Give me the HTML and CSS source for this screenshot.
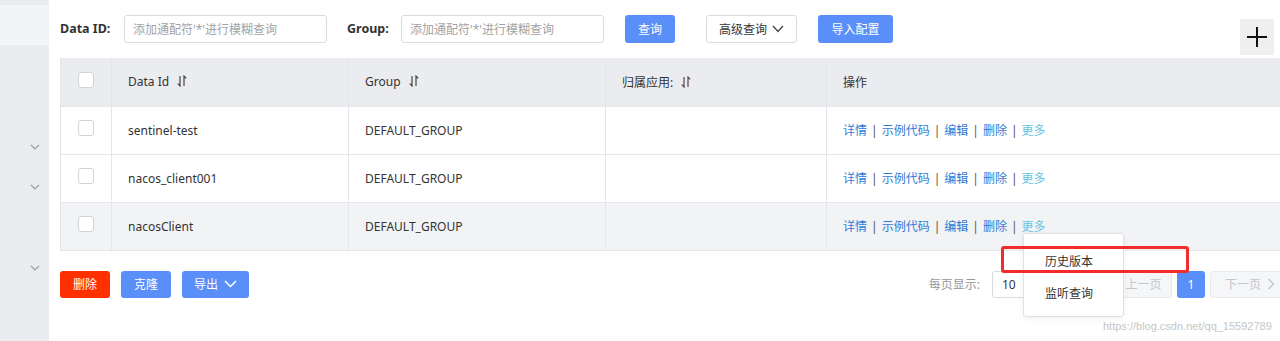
FILE: index.html
```html
<!DOCTYPE html>
<html lang="zh-CN">
<head>
    <meta charset="UTF-8" />
    <meta name="viewport" content="width=device-width, initial-scale=1.0"/>
    <title>配置列表</title>
    <link rel="stylesheet" href="styles.css">
</head>
<body>
<div class="layout">
    <aside class="sidebar">
        <div class="side-active"></div>
        <div class="side-arrow arrow-1"><svg width="10" height="6" viewBox="0 0 10 6"><polyline points="1,1 5,5 9,1" fill="none" stroke="#9a9ea6" stroke-width="1.2"/></svg></div>
        <div class="side-arrow arrow-2"><svg width="10" height="6" viewBox="0 0 10 6"><polyline points="1,1 5,5 9,1" fill="none" stroke="#9a9ea6" stroke-width="1.2"/></svg></div>
        <div class="side-arrow arrow-3"><svg width="10" height="6" viewBox="0 0 10 6"><polyline points="1,1 5,5 9,1" fill="none" stroke="#9a9ea6" stroke-width="1.2"/></svg></div>
    </aside>

    <main class="content">
        <div class="toolbar">
            <label class="field-label label-id">Data ID:</label>
            <input class="search-input" type="text" placeholder="添加通配符'*'进行模糊查询" />
            <label class="field-label label-group">Group:</label>
            <input class="search-input" type="text" placeholder="添加通配符'*'进行模糊查询" />
            <button class="btn btn-primary btn-query">查询</button>
            <button class="btn btn-normal btn-advanced">高级查询
                <svg width="12" height="8" viewBox="0 0 12 8"><polyline points="1,1 6,6.5 11,1" fill="none" stroke="#444" stroke-width="1.3"/></svg>
            </button>
            <button class="btn btn-primary btn-import">导入配置</button>
            <button class="btn-add">
                <svg width="22" height="22" viewBox="0 0 22 22"><path d="M11 1 V21 M1 11 H21" stroke="#111" stroke-width="2"/></svg>
            </button>
        </div>

        <table class="config-table">
            <colgroup>
                <col class="col-check">
                <col class="col-id">
                <col class="col-group">
                <col class="col-app">
                <col class="col-ops">
            </colgroup>
            <thead>
            <tr>
                <th class="cell-check"><span class="checkbox"></span></th>
                <th>Data Id <span class="sort"><svg width="10" height="12" viewBox="0 0 10 12"><path d="M3 1 V11 L0.8 8.6 M7 11 V1 L9.2 3.4" fill="none" stroke="#444" stroke-width="1.2"/></svg></span></th>
                <th>Group <span class="sort"><svg width="10" height="12" viewBox="0 0 10 12"><path d="M3 1 V11 L0.8 8.6 M7 11 V1 L9.2 3.4" fill="none" stroke="#444" stroke-width="1.2"/></svg></span></th>
                <th>归属应用: <span class="sort"><svg width="10" height="12" viewBox="0 0 10 12"><path d="M3 1 V11 L0.8 8.6 M7 11 V1 L9.2 3.4" fill="none" stroke="#5a4646" stroke-width="1.2"/></svg></span></th>
                <th>操作</th>
            </tr>
            </thead>
            <tbody>
            <tr>
                <td class="cell-check"><span class="checkbox"></span></td>
                <td>sentinel-test</td>
                <td>DEFAULT_GROUP</td>
                <td></td>
                <td class="actions"><a>详情</a><span class="sep">|</span><a>示例代码</a><span class="sep">|</span><a>编辑</a><span class="sep">|</span><a>删除</a><span class="sep">|</span><a class="more">更多</a></td>
            </tr>
            <tr>
                <td class="cell-check"><span class="checkbox"></span></td>
                <td>nacos_client001</td>
                <td>DEFAULT_GROUP</td>
                <td></td>
                <td class="actions"><a>详情</a><span class="sep">|</span><a>示例代码</a><span class="sep">|</span><a>编辑</a><span class="sep">|</span><a>删除</a><span class="sep">|</span><a class="more">更多</a></td>
            </tr>
            <tr class="row-hover">
                <td class="cell-check"><span class="checkbox"></span></td>
                <td>nacosClient</td>
                <td>DEFAULT_GROUP</td>
                <td></td>
                <td class="actions"><a>详情</a><span class="sep">|</span><a>示例代码</a><span class="sep">|</span><a>编辑</a><span class="sep">|</span><a>删除</a><span class="sep">|</span><a class="more">更多</a></td>
            </tr>
            </tbody>
        </table>

        <div class="footer-bar">
            <div class="batch">
                <button class="btn btn-danger btn-small">删除</button>
                <button class="btn btn-primary btn-small">克隆</button>
                <button class="btn btn-primary btn-export">导出
                    <svg width="13" height="8" viewBox="0 0 13 8"><polyline points="1,1 6.5,6.5 12,1" fill="none" stroke="#fff" stroke-width="1.5"/></svg>
                </button>
            </div>
            <div class="pager">
                <span class="page-label">每页显示:</span>
                <div class="page-size">10</div>
                <button class="page-btn page-prev">上一页</button>
                <button class="page-btn page-current">1</button>
                <button class="page-btn page-next">下一页
                    <svg width="8" height="12" viewBox="0 0 8 12"><polyline points="1.5,1 6.5,6 1.5,11" fill="none" stroke="#c4c6cb" stroke-width="1.4"/></svg>
                </button>
            </div>
        </div>
    </main>
</div>

<div class="menu">
    <div class="menu-item">历史版本</div>
    <div class="menu-item">监听查询</div>
</div>
<div class="highlight"></div>
<div class="watermark">https://blog.csdn.net/qq_15592789</div>
</body>
</html>
```

FILE: styles.css
```css
body {
    margin: 0;
    font-family: "Noto Sans", "Noto Sans CJK SC", sans-serif;
    font-size: 12px;
    color: #333;
    background: #ffffff;
    overflow: hidden;
    width: 1280px;
    height: 341px;
    position: relative;
}
.layout {
    display: flex;
    height: 341px;
}
.sidebar {
    width: 49px;
    flex-shrink: 0;
    background: #eaecf0;
    position: relative;
}
.side-active {
    margin-top: 5px;
    height: 40px;
    background: #f3f4f7;
}
.side-arrow {
    position: absolute;
    left: 30px;
    line-height: 0;
}
.arrow-1 { top: 144px; }
.arrow-2 { top: 184px; }
.arrow-3 { top: 265px; }

.content {
    padding: 15px 0 0 11px;
    width: 1230px;
    flex-shrink: 0;
}
.toolbar {
    display: flex;
    align-items: flex-start;
    height: 40px;
}
.field-label {
    font-weight: 700;
    line-height: 28px;
    color: #333;
    font-size: 12.5px;
}
.label-id { width: 64px; }
.label-group { width: 54px; margin-left: 20px; }
.search-input {
    width: 203px;
    height: 28px;
    box-sizing: border-box;
    border: 1px solid #d9dbe0;
    border-radius: 3px;
    padding: 0 8px;
    font-family: inherit;
    font-size: 12px;
    color: #333;
    outline: none;
}
.search-input::placeholder {
    color: #a3a3a3;
}
.btn {
    height: 28px;
    border-radius: 3px;
    border: none;
    font-family: inherit;
    font-size: 12px;
    padding: 0;
    display: inline-flex;
    align-items: center;
    justify-content: center;
    gap: 5px;
    cursor: pointer;
}
.btn-primary {
    background: #5a8ef8;
    color: #fff;
}
.btn-danger {
    background: #ff3000;
    color: #fff;
}
.btn-normal {
    background: #fff;
    border: 1px solid #d9dbe0;
    color: #333;
}
.btn-query { width: 50px; margin-left: 21px; }
.btn-advanced { width: 91px; margin-left: 31px; }
.btn-import { width: 75px; margin-left: 21px; }
.btn-add {
    margin-left: auto;
    margin-right: 16px;
    margin-top: 4px;
    width: 34px;
    height: 36px;
    border: none;
    background: #efefef;
    padding: 0;
    display: flex;
    align-items: center;
    justify-content: center;
}

.config-table {
    margin-top: 3px;
    width: 1230px;
    border-collapse: collapse;
    table-layout: fixed;
    border-left: 1px solid #e4e6ea;
}
.col-check { width: 51px; }
.col-id { width: 237px; }
.col-group { width: 257px; }
.col-app { width: 221px; }
.config-table th,
.config-table td {
    height: 48px;
    box-sizing: border-box;
    padding: 0 16px;
    text-align: left;
    border-right: 1px solid #e4e6ea;
    border-bottom: 1px solid #e4e6ea;
    white-space: nowrap;
}
.config-table th {
    background: #ebecf0;
    font-weight: 400;
    color: #333;
}
.config-table .cell-check {
    padding: 0 0 0 17px;
}
.checkbox {
    display: block;
    width: 16px;
    height: 16px;
    box-sizing: border-box;
    border: 1px solid #d1d4da;
    border-radius: 3px;
    background: #fff;
    margin-top: -4px;
}
.sort {
    display: inline-block;
    margin-left: 5px;
    vertical-align: -1px;
    line-height: 0;
}
.row-hover td {
    background: #f2f3f5;
}
.actions a {
    color: #2f7ad6;
}
.actions a.more {
    color: #67c4e6;
}
.sep {
    margin: 0 4px;
    color: #555;
}

.footer-bar {
    display: flex;
    justify-content: space-between;
    margin-top: 20px;
}
.batch {
    display: flex;
    gap: 11px;
}
.btn-small { width: 50px; height: 27px; }
.btn-export { width: 67px; height: 27px; gap: 6px; }
.pager {
    display: flex;
    align-items: center;
}
.page-label {
    color: #999;
    margin-right: 12px;
}
.page-size {
    width: 108px;
    height: 27px;
    box-sizing: border-box;
    border: 1px solid #d9dbe0;
    border-radius: 3px;
    padding-left: 9px;
    line-height: 25px;
}
.page-btn {
    height: 27px;
    box-sizing: border-box;
    border-radius: 3px;
    font-family: inherit;
    font-size: 12px;
    padding: 0;
    display: inline-flex;
    align-items: center;
    justify-content: center;
    gap: 6px;
}
.page-prev {
    width: 57px;
    margin-left: 15px;
    background: #f5f6f8;
    border: 1px solid #e8e9ec;
    color: #c4c6cb;
}
.page-current {
    width: 28px;
    margin-left: 5px;
    background: #5a8ef8;
    border: none;
    color: #fff;
}
.page-next {
    width: 80px;
    margin-left: 5px;
    background: #f5f6f8;
    border: 1px solid #e8e9ec;
    color: #c4c6cb;
}

.menu {
    position: absolute;
    left: 1023px;
    top: 233px;
    width: 101px;
    height: 84px;
    box-sizing: border-box;
    background: #fff;
    border: 1px solid #dfe1e6;
    border-radius: 3px;
    box-shadow: 0 2px 6px rgba(0, 0, 0, 0.06);
    padding-top: 16px;
}
.menu-item {
    padding-left: 21px;
    height: 32px;
    line-height: 24px;
    color: #333;
}
.highlight {
    position: absolute;
    left: 1001px;
    top: 246px;
    width: 188px;
    height: 27px;
    box-sizing: border-box;
    border: 3px solid #f52a2a;
    border-radius: 3px;
}
.watermark {
    position: absolute;
    left: 1103px;
    top: 320px;
    font-family: "Liberation Sans", sans-serif;
    font-size: 11px;
    color: #c6c6c6;
}
```
